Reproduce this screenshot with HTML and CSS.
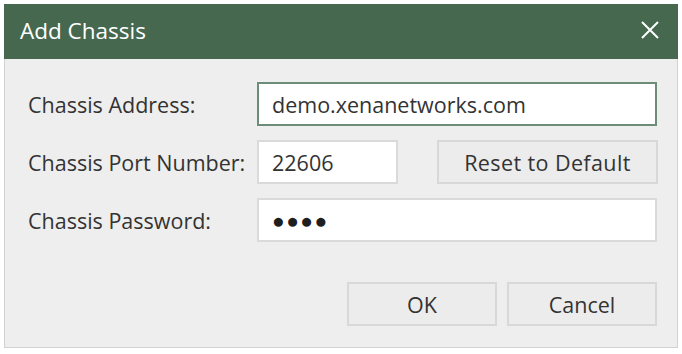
FILE: index.html
```html
<!DOCTYPE html>
<html lang="en">
<head>
    <meta charset="UTF-8">
    <title>Add Chassis</title>
    <link rel="stylesheet" href="styles.css">
</head>
<body>
    <div class="dialog">
        <div class="titlebar">
            <span class="title">Add Chassis</span>
            <svg class="close" width="20" height="20" viewBox="0 0 20 20">
                <path d="M2 2 L18 18 M18 2 L2 18" stroke="#ffffff" stroke-width="2" fill="none"/>
            </svg>
        </div>
        <div class="content">
            <div class="form">
                <label class="label">Chassis Address:</label>
                <input class="field wide focused" type="text" value="demo.xenanetworks.com">

                <label class="label">Chassis Port Number:</label>
                <div class="port-row">
                    <input class="field port" type="text" value="22606">
                    <button class="btn reset">Reset to Default</button>
                </div>

                <label class="label">Chassis Password:</label>
                <div class="field wide password">&#9679;&#9679;&#9679;&#9679;</div>
            </div>
            <div class="actions">
                <button class="btn action">OK</button>
                <button class="btn action">Cancel</button>
            </div>
        </div>
    </div>
</body>
</html>
```

FILE: styles.css
```css
body {
    margin: 0;
    padding: 4px;
    background-color: #ffffff;
    font-family: 'Open Sans', 'Noto Sans', sans-serif;
    color: #333333;
}
.dialog {
    width: 674px;
    height: 344px;
    display: flex;
    flex-direction: column;
}
.titlebar {
    height: 55px;
    background-color: #45684f;
    color: #ffffff;
    display: flex;
    align-items: center;
    justify-content: space-between;
    padding: 0 18px 0 16px;
}
.title {
    font-size: 22.5px;
    margin-top: -2px;
}
.close {
    margin-top: -3px;
}
.content {
    flex: 1;
    background-color: #eeeeee;
    border: 1px solid #d2d2d2;
    border-top: none;
    padding: 23px 20px 20px 23px;
    display: flex;
    flex-direction: column;
}
.form {
    display: grid;
    grid-template-columns: 229px 1fr;
    row-gap: 14px;
    align-items: center;
}
.label {
    font-size: 21.5px;
    color: #333333;
}
.field {
    box-sizing: border-box;
    height: 44px;
    border: 2px solid #dadada;
    background-color: #ffffff;
    font-family: inherit;
    font-size: 21.5px;
    color: #333333;
    padding: 0 13px;
    outline: none;
}
.wide {
    width: 400px;
}
.focused {
    border-color: #6b8d79;
}
.port-row {
    display: flex;
    justify-content: space-between;
    width: 401px;
}
.port {
    width: 141px;
}
.password {
    display: flex;
    align-items: center;
    font-size: 21px;
    letter-spacing: 1.5px;
    color: #1e1e1e;
}
.btn {
    box-sizing: border-box;
    height: 44px;
    border: 2px solid #d8d8d8;
    background-color: #ececec;
    font-family: inherit;
    font-size: 21.5px;
    color: #333333;
}
.reset {
    width: 221px;
    letter-spacing: 0.4px;
}
.actions {
    margin-top: auto;
    display: flex;
    justify-content: flex-end;
    gap: 10px;
    padding-bottom: 1px;
}
.action {
    width: 150px;
}
```
